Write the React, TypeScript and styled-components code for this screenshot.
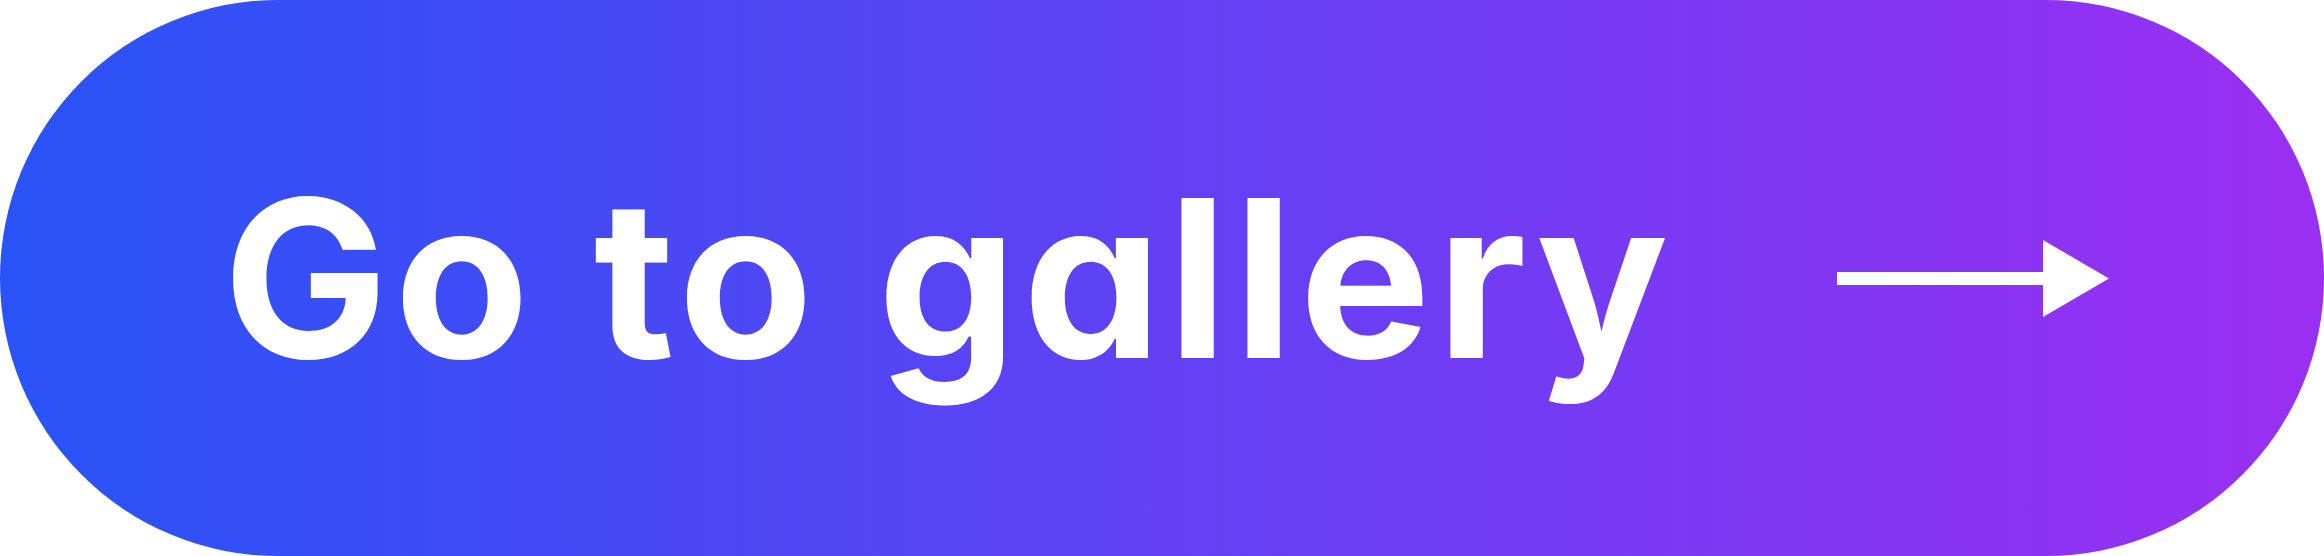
import React, { useLayoutEffect, useState } from "react";
import styled, { createGlobalStyle } from "styled-components";

const GlobalStyle = createGlobalStyle`
  html, body {
    margin: 0;
    padding: 0;
    background: #ffffff;
  }
  body {
    font-family: "Inter", "Liberation Sans", sans-serif;
  }
`;

const LABEL_TEXT = "Go to gallery";
const LABEL_FONT = `700 220px "Inter", "Liberation Sans", sans-serif`;
// ink width of the label in the design
const LABEL_WIDTH = 1421;

const GalleryButton = styled.button`
  display: flex;
  align-items: center;
  width: 2324px;
  height: 556px;
  padding: 0 0 0 233px;
  box-sizing: border-box;
  border: none;
  border-radius: 278px;
  background: linear-gradient(90deg, #2853f6 0%, #9a2ff1 100%);
  color: #ffffff;
  cursor: pointer;
`;

const Label = styled.span`
  font: ${LABEL_FONT};
  font-feature-settings: "cv11" 1;
  line-height: 1;
  white-space: nowrap;
`;

const ArrowIcon = styled.svg`
  flex-shrink: 0;
  margin-left: 172px;
  width: 272px;
  height: 77px;
`;

type Fit = { spacing: number; left: number; right: number };

const measure = (): Fit => {
  const ctx = document.createElement("canvas").getContext("2d");
  if (!ctx) return { spacing: 0, left: 0, right: 0 };
  ctx.font = LABEL_FONT;
  const m = ctx.measureText(LABEL_TEXT);
  const ink = m.actualBoundingBoxLeft + m.actualBoundingBoxRight;
  const spacing = (LABEL_WIDTH - ink) / (LABEL_TEXT.length - 1);
  return {
    spacing,
    left: m.actualBoundingBoxLeft,
    right: -(m.width - m.actualBoundingBoxRight + spacing),
  };
};

const App: React.FC = () => {
  const [fit, setFit] = useState<Fit>({ spacing: 0, left: 0, right: 0 });

  useLayoutEffect(() => {
    setFit(measure());
    document.fonts?.ready.then(() => setFit(measure()));
  }, []);

  return (
    <>
      <GlobalStyle />
      <GalleryButton type="button">
        <Label
          style={{
            letterSpacing: `${fit.spacing}px`,
            marginLeft: `${fit.left}px`,
            marginRight: `${fit.right}px`,
          }}
        >
          {LABEL_TEXT}
        </Label>
        <ArrowIcon viewBox="0 0 272 77" aria-hidden="true">
          <rect x="0" y="32" width="210" height="13" fill="#ffffff" />
          <polygon points="206,0 272,38.5 206,77" fill="#ffffff" />
        </ArrowIcon>
      </GalleryButton>
    </>
  );
};

export default App;
